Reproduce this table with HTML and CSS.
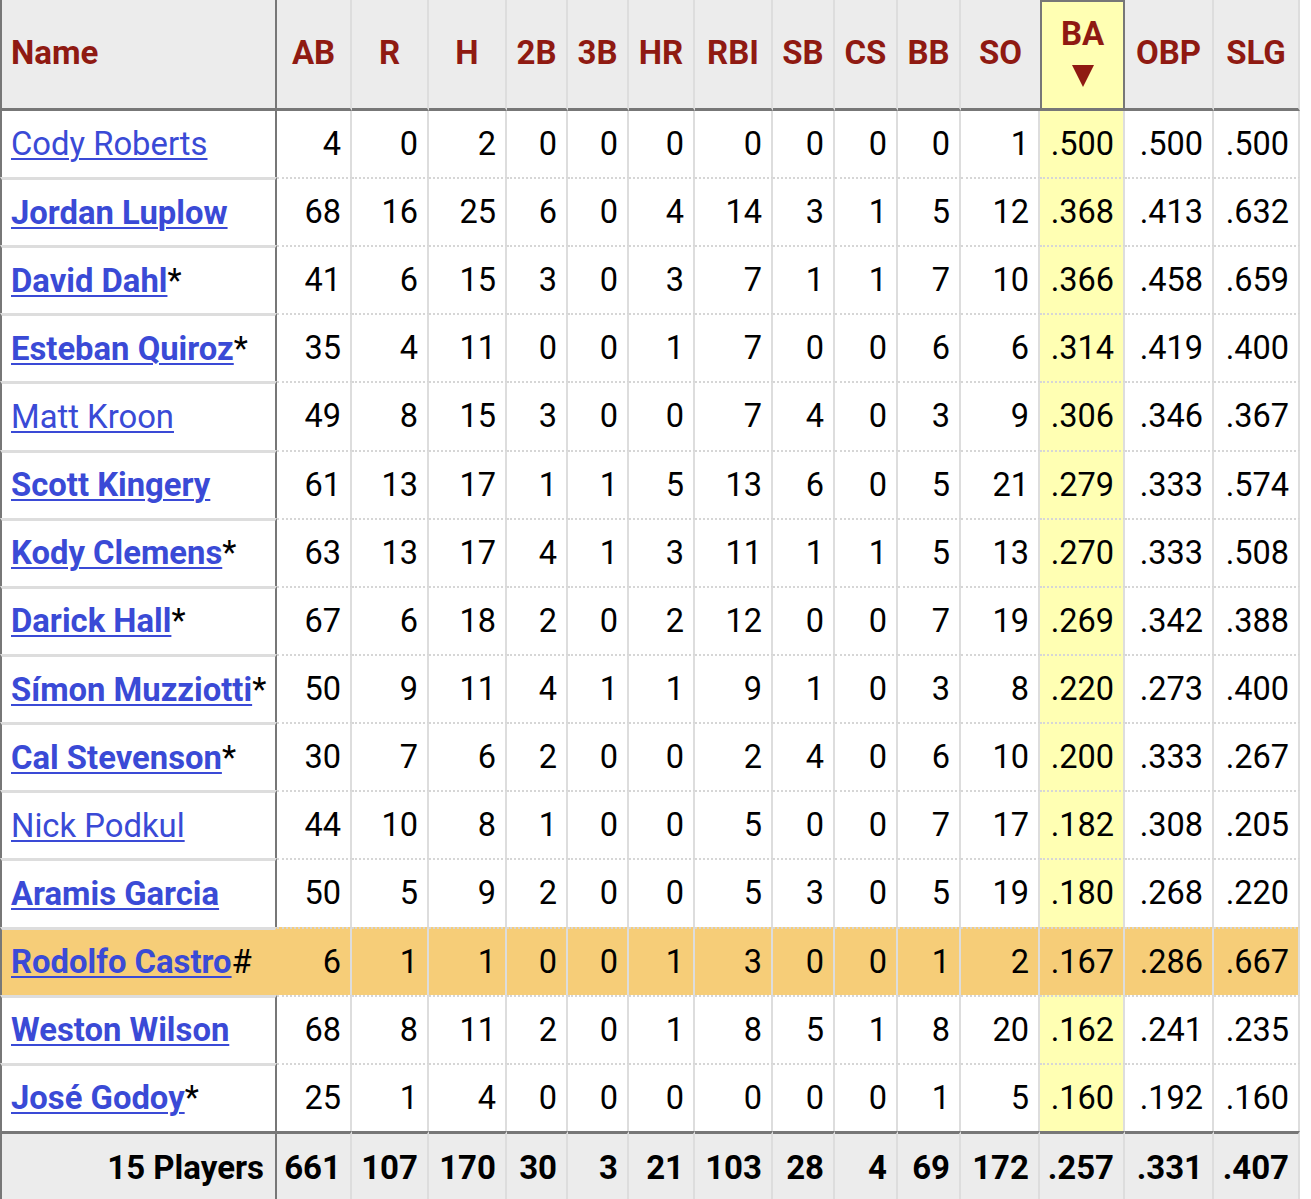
FILE: index.html
```html
<!DOCTYPE html>
<html lang="en">
<head>
<meta charset="utf-8">
<title>Batting Stats</title>
<link rel="stylesheet" href="styles.css">
</head>
<body>
<table class="stats">
  <thead>
    <tr>
      <th class="c-name">Name</th>
      <th class="w75">AB</th>
      <th class="w77">R</th>
      <th class="w78">H</th>
      <th class="w61">2B</th>
      <th class="w61">3B</th>
      <th class="w66">HR</th>
      <th class="w78">RBI</th>
      <th class="w62">SB</th>
      <th class="w63">CS</th>
      <th class="w63">BB</th>
      <th class="w79 pre-sort">SO</th>
      <th class="w85 sorted"><div class="sort-label">BA</div><span class="sort-arrow"></span></th>
      <th class="w89">OBP</th>
      <th class="w86">SLG</th>
    </tr>
  </thead>
  <tbody>
    <tr><th><a href="#">Cody Roberts</a></th><td>4</td><td>0</td><td>2</td><td>0</td><td>0</td><td>0</td><td>0</td><td>0</td><td>0</td><td>0</td><td>1</td><td class="ba">.500</td><td>.500</td><td>.500</td></tr>
    <tr><th><a class="b" href="#">Jordan Luplow</a></th><td>68</td><td>16</td><td>25</td><td>6</td><td>0</td><td>4</td><td>14</td><td>3</td><td>1</td><td>5</td><td>12</td><td class="ba">.368</td><td>.413</td><td>.632</td></tr>
    <tr><th><a class="b" href="#">David Dahl</a>*</th><td>41</td><td>6</td><td>15</td><td>3</td><td>0</td><td>3</td><td>7</td><td>1</td><td>1</td><td>7</td><td>10</td><td class="ba">.366</td><td>.458</td><td>.659</td></tr>
    <tr><th><a class="b" href="#">Esteban Quiroz</a>*</th><td>35</td><td>4</td><td>11</td><td>0</td><td>0</td><td>1</td><td>7</td><td>0</td><td>0</td><td>6</td><td>6</td><td class="ba">.314</td><td>.419</td><td>.400</td></tr>
    <tr><th><a href="#">Matt Kroon</a></th><td>49</td><td>8</td><td>15</td><td>3</td><td>0</td><td>0</td><td>7</td><td>4</td><td>0</td><td>3</td><td>9</td><td class="ba">.306</td><td>.346</td><td>.367</td></tr>
    <tr><th><a class="b" href="#">Scott Kingery</a></th><td>61</td><td>13</td><td>17</td><td>1</td><td>1</td><td>5</td><td>13</td><td>6</td><td>0</td><td>5</td><td>21</td><td class="ba">.279</td><td>.333</td><td>.574</td></tr>
    <tr><th><a class="b" href="#">Kody Clemens</a>*</th><td>63</td><td>13</td><td>17</td><td>4</td><td>1</td><td>3</td><td>11</td><td>1</td><td>1</td><td>5</td><td>13</td><td class="ba">.270</td><td>.333</td><td>.508</td></tr>
    <tr><th><a class="b" href="#">Darick Hall</a>*</th><td>67</td><td>6</td><td>18</td><td>2</td><td>0</td><td>2</td><td>12</td><td>0</td><td>0</td><td>7</td><td>19</td><td class="ba">.269</td><td>.342</td><td>.388</td></tr>
    <tr><th><a class="b" href="#">Símon Muzziotti</a>*</th><td>50</td><td>9</td><td>11</td><td>4</td><td>1</td><td>1</td><td>9</td><td>1</td><td>0</td><td>3</td><td>8</td><td class="ba">.220</td><td>.273</td><td>.400</td></tr>
    <tr><th><a class="b" href="#">Cal Stevenson</a>*</th><td>30</td><td>7</td><td>6</td><td>2</td><td>0</td><td>0</td><td>2</td><td>4</td><td>0</td><td>6</td><td>10</td><td class="ba">.200</td><td>.333</td><td>.267</td></tr>
    <tr><th><a href="#">Nick Podkul</a></th><td>44</td><td>10</td><td>8</td><td>1</td><td>0</td><td>0</td><td>5</td><td>0</td><td>0</td><td>7</td><td>17</td><td class="ba">.182</td><td>.308</td><td>.205</td></tr>
    <tr><th><a class="b" href="#">Aramis Garcia</a></th><td>50</td><td>5</td><td>9</td><td>2</td><td>0</td><td>0</td><td>5</td><td>3</td><td>0</td><td>5</td><td>19</td><td class="ba">.180</td><td>.268</td><td>.220</td></tr>
    <tr class="hl"><th><a class="b" href="#">Rodolfo Castro</a>#</th><td>6</td><td>1</td><td>1</td><td>0</td><td>0</td><td>1</td><td>3</td><td>0</td><td>0</td><td>1</td><td>2</td><td class="ba">.167</td><td>.286</td><td>.667</td></tr>
    <tr><th><a class="b" href="#">Weston Wilson</a></th><td>68</td><td>8</td><td>11</td><td>2</td><td>0</td><td>1</td><td>8</td><td>5</td><td>1</td><td>8</td><td>20</td><td class="ba">.162</td><td>.241</td><td>.235</td></tr>
    <tr><th><a class="b" href="#">José Godoy</a>*</th><td>25</td><td>1</td><td>4</td><td>0</td><td>0</td><td>0</td><td>0</td><td>0</td><td>0</td><td>1</td><td>5</td><td class="ba">.160</td><td>.192</td><td>.160</td></tr>
  </tbody>
  <tfoot>
    <tr><th>15 Players</th><td>661</td><td>107</td><td>170</td><td>30</td><td>3</td><td>21</td><td>103</td><td>28</td><td>4</td><td>69</td><td>172</td><td>.257</td><td>.331</td><td>.407</td></tr>
  </tfoot>
</table>
</body>
</html>
```
FILE: styles.css
```css
html, body {
  margin: 0;
  padding: 0;
  background: #fff;
}

.stats {
  border-collapse: separate;
  border-spacing: 0;
  table-layout: fixed;
  width: 1300px;
  font-family: Roboto, "Liberation Sans", sans-serif;
  font-size: 32.5px;
  color: #000;
}

.stats th,
.stats td {
  box-sizing: border-box;
  padding: 0 9px 0 6px;
  border-right: 2px solid #dddddd;
  white-space: nowrap;
  overflow: hidden;
}

/* header */
.stats thead th {
  height: 111px;
  background: #ececec;
  color: #8f1a12;
  font-weight: 700;
  font-size: 33px;
  text-align: center;
  vertical-align: middle;
  border-bottom: 3px solid #777;
  padding: 0 2px 3px;
}
.stats thead th.c-name {
  width: 277px;
  text-align: left;
  padding-left: 9px;
}
.w75 { width: 75px; }
.w77 { width: 77px; }
.w78 { width: 78px; }
.w61 { width: 61px; }
.w66 { width: 66px; }
.w62 { width: 62px; }
.w63 { width: 63px; }
.w79 { width: 79px; }
.w85 { width: 85px; }
.w89 { width: 89px; }
.w86 { width: 86px; }

.stats thead th.pre-sort {
  border-right: 0;
}
.stats thead th.sorted {
  background: #ffffb3;
  border: 2px solid #777;
  border-bottom: 3px solid #777;
  padding-top: 0;
  padding-bottom: 10px;
}
.sort-label {
  line-height: 40px;
}
.sort-arrow {
  display: block;
  width: 0;
  height: 0;
  margin: 11px auto 0;
  border-left: 11px solid transparent;
  border-right: 11px solid transparent;
  border-top: 22px solid #8f1a12;
}

/* first column (names) */
.stats th:first-child {
  border-left: 2px solid #777;
  border-right: 2px solid #777;
}
.stats tbody th {
  text-align: left;
  font-weight: 400;
  font-size: 32.8px;
  padding-left: 9px;
  vertical-align: middle;
}

/* body rows */
.stats tbody tr {
  height: 68.15px;
}
.stats tbody tr:first-child {
  height: 66px;
}
.stats tbody tr + tr th {
  border-top: 3px solid #dddddd;
}
.stats tbody tr + tr td {
  border-top: 2px dotted #d6d6d6;
}
.stats tbody td {
  text-align: right;
  vertical-align: middle;
}
.stats td.ba {
  background: #ffffb3;
}

.stats a {
  color: #3a4ad6;
  text-decoration: underline;
  text-decoration-thickness: 2px;
  text-underline-offset: 3px;
}
.stats a.b {
  font-weight: 700;
}

/* highlighted row */
.stats tr.hl th,
.stats tr.hl td,
.stats tr.hl td.ba {
  background: #f6cd78;
}
.stats tr.hl th {
  border-right-color: #f6cd78;
}

/* footer */
.stats tfoot th,
.stats tfoot td {
  height: 70px;
  background: #ececec;
  border-top: 3px solid #777;
  font-weight: 700;
  font-size: 33px;
  text-align: right;
  vertical-align: middle;
}
.stats tfoot th {
  padding-right: 11px;
}
```
